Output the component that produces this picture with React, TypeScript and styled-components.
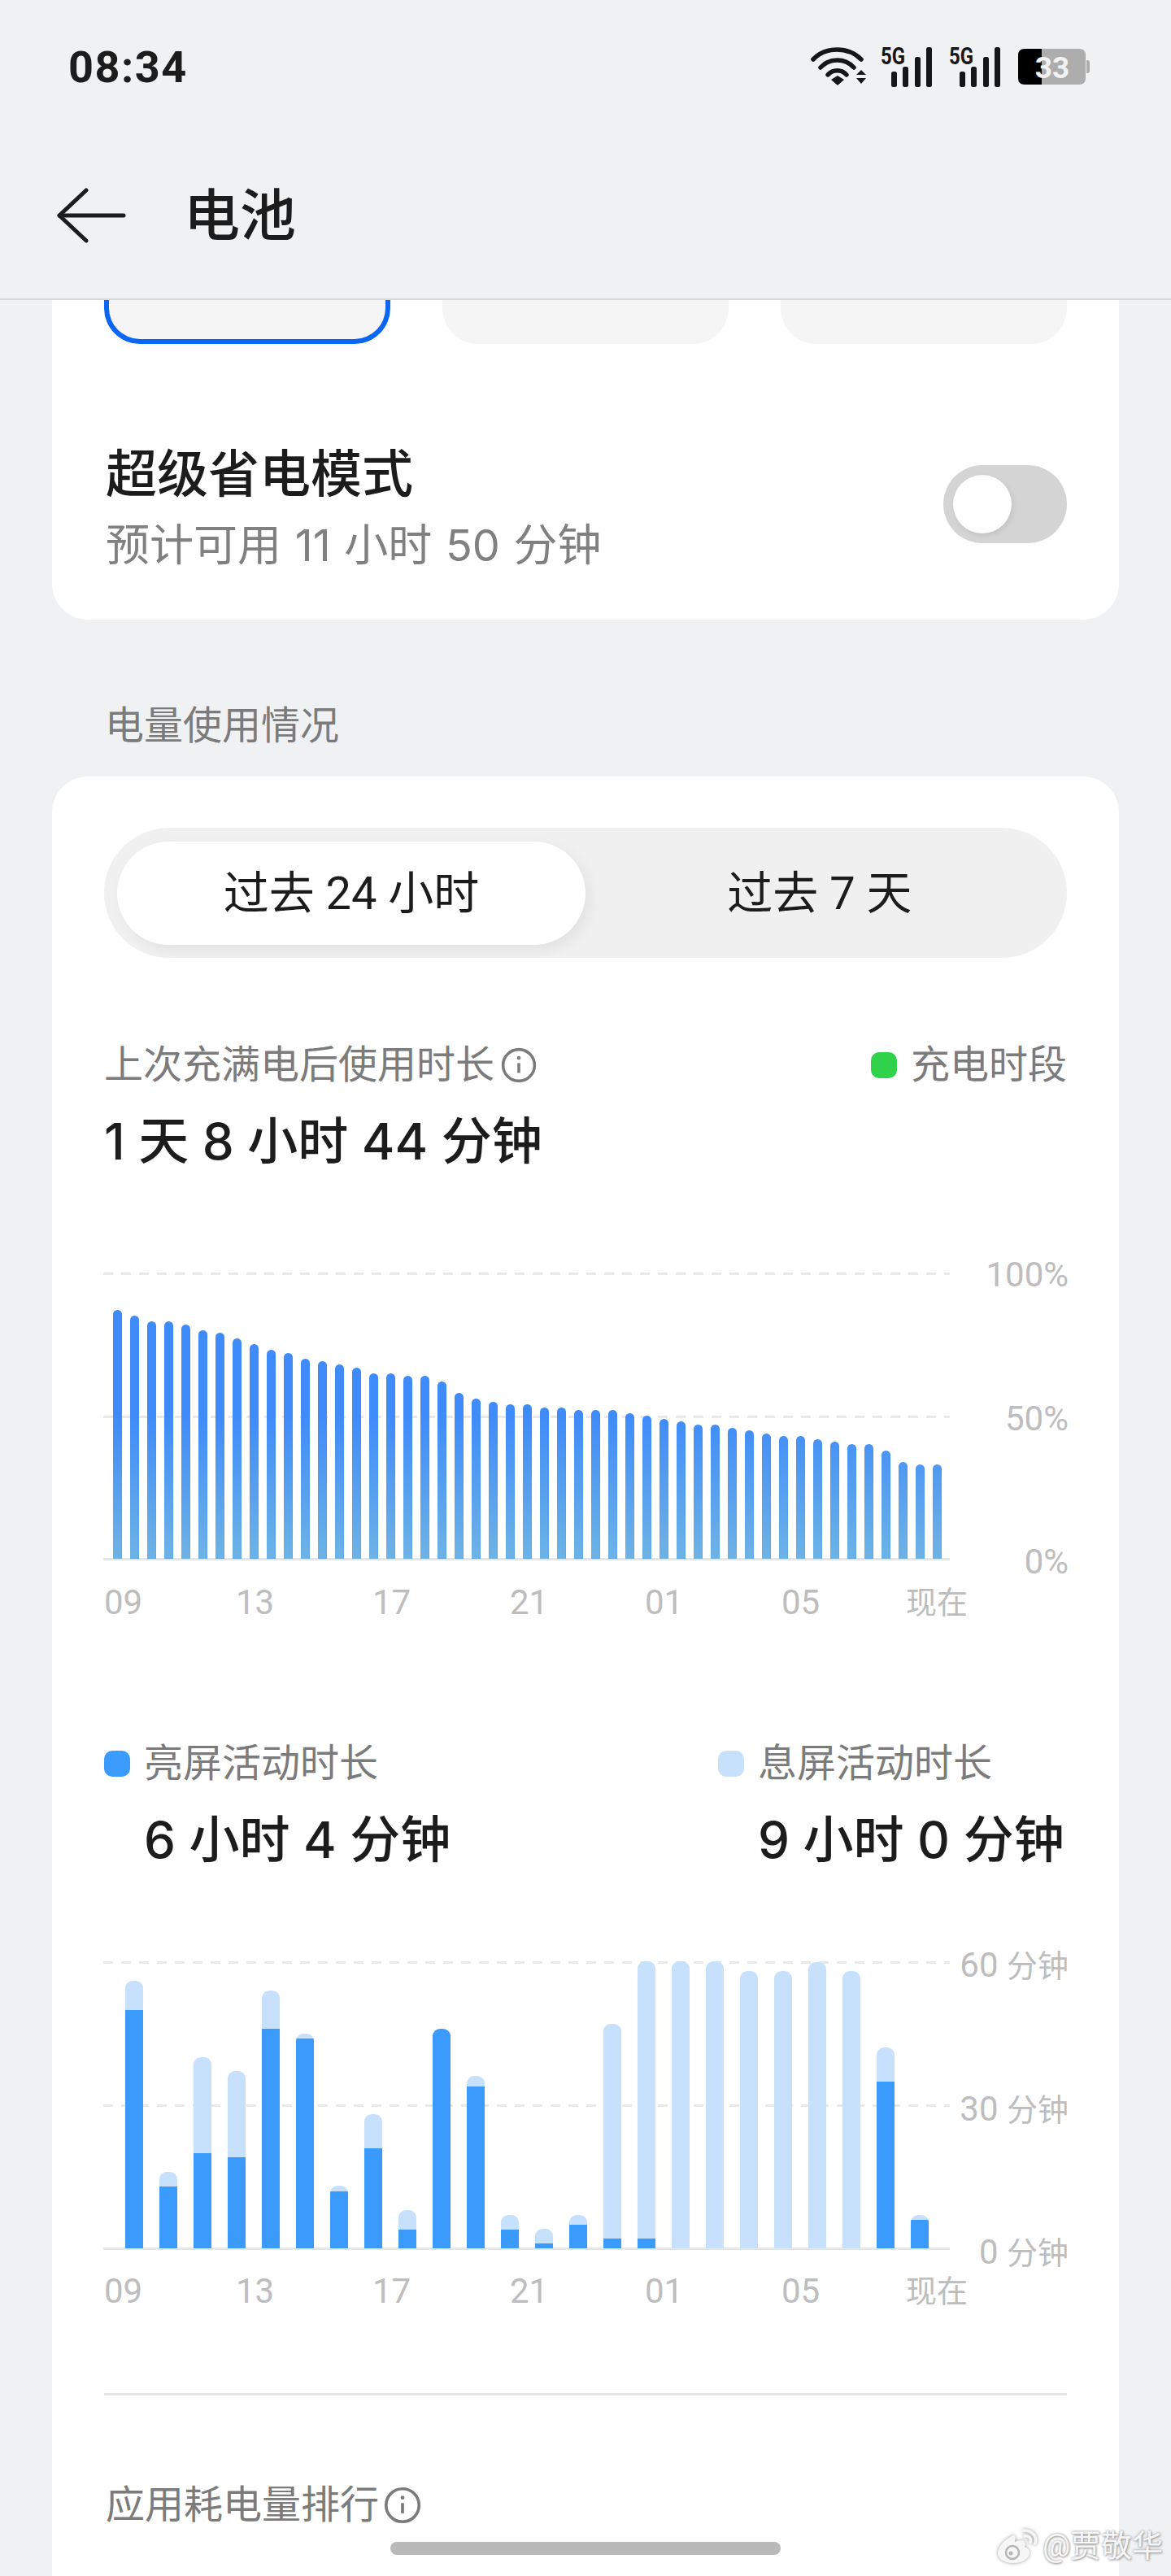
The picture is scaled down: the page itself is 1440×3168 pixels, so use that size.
import React from 'react';
import styled, { createGlobalStyle } from 'styled-components';

const levelTops = [
  335, 357, 378, 378, 388, 409, 420, 441, 462, 483, 494, 515, 525, 536, 547, 568, 568, 578, 578, 600, 642, 663, 673,
  684, 684, 694, 694, 705, 705, 705, 716, 726, 737, 747, 758, 758, 769, 779, 790, 800, 800, 811, 821, 831, 831, 853,
  895, 905, 905,
];

const activity = [
  [169, 276], [873, 927], [450, 804], [503, 819], [204, 345], [363, 381], [926, 945], [662, 786],
  [1014, 1086], [345, 345], [521, 558], [1032, 1086], [1084, 1137], [1032, 1068], [327, 1119], [97, 1119],
  [97, 1155], [97, 1155], [134, 1155], [134, 1155], [99, 1155], [134, 1155], [416, 540], [1032, 1050],
];

const hours = ['09', '13', '17', '21', '01', '05'];

const GlobalStyle = createGlobalStyle`
  html, body {
    margin: 0;
    padding: 0;
    background: #f0f1f3;
  }
  * {
    box-sizing: border-box;
  }
`;

const Page = styled.div`
  position: relative;
  width: 1440px;
  height: 3168px;
  overflow: hidden;
  background: #f0f1f3;
  font-family: Roboto, 'Noto Sans CJK SC', sans-serif;
  color: #1c1c1c;
`;

const Header = styled.header`
  height: 369px;
  border-bottom: 2px solid #d9d9d9;
`;

const StatusBar = styled.div`
  display: flex;
  align-items: center;
  justify-content: space-between;
  height: 164px;
  padding: 0 99px 0 84px;
`;

const Clock = styled.span`
  font-size: 54px;
  font-weight: 700;
  letter-spacing: 1.5px;
`;

const StatusIcons = styled.div`
  display: flex;
  align-items: center;
  gap: 18px;
`;

const SignalSvg = styled.svg`
  margin-top: -6px;
`;

const TitleBar = styled.div`
  display: flex;
  align-items: center;
  gap: 71px;
  height: 202px;
  padding-left: 70px;
`;

const Title = styled.h1`
  margin: 0;
  padding-top: 3px;
  font-size: 69px;
  font-weight: 500;
  line-height: 80px;
`;

const Card = styled.section`
  margin: 0 64px;
  background: #fff;
`;

const ModeCard = styled(Card)`
  border-radius: 0 0 44px 44px;
  padding: 0 64px 56px;
`;

const Tiles = styled.div`
  display: flex;
  gap: 64px;
`;

const Tile = styled.div<{ $active?: boolean }>`
  width: 352px;
  height: 54px;
  background: #f5f5f5;
  border-radius: 0 0 44px 44px;
  border: ${({ $active }) => ($active ? '6px solid #0a66f5' : 'none')};
  border-top: none;
`;

const SaverRow = styled.div`
  display: flex;
  justify-content: space-between;
  margin-top: 121px;
`;

const SaverText = styled.div`
  padding-left: 2px;
`;

const SaverTitle = styled.div`
  font-size: 63px;
  font-weight: 500;
  line-height: 80px;
`;

const SaverHint = styled.div`
  margin-top: 12px;
  font-family: Inter, 'Noto Sans CJK SC', sans-serif;
  font-size: 54px;
  line-height: 70px;
  word-spacing: 1.5px;
  color: #808080;
`;

const Toggle = styled.div`
  display: flex;
  align-items: center;
  width: 152px;
  height: 96px;
  margin-top: 28px;
  padding-left: 12px;
  border-radius: 48px;
  background: #d4d4d4;
`;

const Knob = styled.div`
  width: 72px;
  height: 72px;
  border-radius: 50%;
  background: #fff;
  box-shadow: 2px 3px 6px rgba(0, 0, 0, 0.08);
`;

const SectionLabel = styled.div`
  margin: 101px 0 32px 129px;
  font-size: 48px;
  line-height: 60px;
  color: #7b7b7b;
`;

const UsageCard = styled(Card)`
  border-radius: 44px 44px 0 0;
  padding: 63px 64px 120px;
`;

const Segmented = styled.div`
  display: flex;
  align-items: center;
  height: 160px;
  padding: 0 16px;
  border-radius: 80px;
  background: #f0f0f0;
`;

const Segment = styled.div<{ $active?: boolean }>`
  display: flex;
  align-items: center;
  justify-content: center;
  flex: ${({ $active }) => ($active ? '0 0 576px' : '1')};
  height: 127px;
  padding-top: 2px;
  border-radius: 64px;
  font-size: 56px;
  line-height: 60px;
  background: ${({ $active }) => ($active ? '#fff' : 'transparent')};
  box-shadow: ${({ $active }) => ($active ? '6px 6px 16px rgba(0, 0, 0, 0.06)' : 'none')};
`;

const StatRow = styled.div<{ $top: number }>`
  display: grid;
  grid-template-columns: 755px auto;
  margin-top: ${({ $top }) => $top}px;
`;

const SpreadRow = styled.div`
  display: flex;
  align-items: flex-start;
  justify-content: space-between;
  margin-top: 102px;
`;

const GreyLabel = styled.div`
  display: flex;
  align-items: center;
  font-size: 48px;
  line-height: 60px;
  color: #7b7b7b;
`;

const Swatch = styled.span<{ $color: string }>`
  width: 32px;
  height: 32px;
  border-radius: 10px;
  margin-right: 17px;
  background: ${({ $color }) => $color};
`;

const InfoIcon = styled.svg<{ $gap: number }>`
  margin-left: ${({ $gap }) => $gap}px;
`;

const BigValue = styled.div<{ $indent?: boolean }>`
  margin-top: 24px;
  padding-left: ${({ $indent }) => ($indent ? '49px' : '0')};
  font-family: Inter, 'Noto Sans CJK SC', sans-serif;
  font-size: 62px;
  font-weight: 500;
  line-height: 80px;
`;

const ChartRow = styled.div<{ $top: number }>`
  display: grid;
  grid-template-columns: 1041px 146px;
  margin: ${({ $top }) => $top}px 0 0 -1px;
`;

const Plot = styled.div`
  display: grid;
  height: 354px;
`;

const GridLines = styled.div`
  grid-area: 1 / 1;
  display: flex;
  flex-direction: column;
  justify-content: space-between;
`;

const DashLine = styled.div<{ $solid?: boolean }>`
  height: 3px;
  background: ${({ $solid }) =>
    $solid ? '#e6e6e6' : 'repeating-linear-gradient(90deg, #e8e8e8 0 12px, transparent 12px 22px)'};
`;

const Bars = styled.div<{ $gap: number; $pad: number }>`
  grid-area: 1 / 1;
  display: flex;
  align-items: flex-end;
  gap: ${({ $gap }) => $gap}px;
  padding: 0 0 2px ${({ $pad }) => $pad}px;
`;

const LevelBar = styled.div`
  width: 10.5px;
  border-radius: 5.25px 5.25px 0 0;
  background: linear-gradient(#3f8bfa 0, #3f8bfa 130px, #6eb3e5 306px) bottom / 100% 306px no-repeat;
  background-color: #3f8bfa;
`;

const StackBar = styled.div`
  display: flex;
  flex-direction: column;
  justify-content: flex-end;
  width: 22px;
  overflow: hidden;
  border-radius: 9px 9px 0 0;
  background: #c7e1fd;
`;

const StackFill = styled.div`
  background: #3a9bfc;
`;

const YAxis = styled.div<{ $top: number; $height: number }>`
  display: flex;
  flex-direction: column;
  align-items: flex-end;
  justify-content: space-between;
  height: ${({ $height }) => $height}px;
  margin-top: ${({ $top }) => $top}px;
  margin-bottom: -60px;
  font-size: 42px;
  line-height: 50px;
  white-space: nowrap;
  color: #bdbdbd;
`;

const Unit = styled.span`
  font-size: 38px;
`;

const XAxis = styled.div`
  display: grid;
  grid-template-columns: 162px 168px 169px 166px 168px 153px auto;
  margin-top: 27px;
  font-size: 42px;
  line-height: 50px;
  color: #bdbdbd;
`;

const Divider = styled.div`
  height: 3px;
  margin-top: 100px;
  background: #e6e6e6;
`;

const RankRow = styled(GreyLabel)`
  margin-top: 105px;
  padding-left: 2px;
`;

const HomeBar = styled.div`
  position: absolute;
  left: 480px;
  top: 3126px;
  width: 480px;
  height: 16px;
  border-radius: 8px;
  background: #b9b9b9;
`;

const Watermark = styled.div`
  position: absolute;
  left: 1226px;
  top: 3107px;
  display: flex;
  align-items: center;
  gap: 4px;
  font-size: 38px;
  line-height: 48px;
  white-space: nowrap;
  color: #f6f6f6;
  text-shadow: 0 0 3px #9a9a9a, 1px 1px 3px #9a9a9a;
`;

const WeiboSvg = styled.svg`
  filter: drop-shadow(0 0 2px #9a9a9a);
`;

const Info = ({ size, gap }: { size: number; gap: number }) => (
  <InfoIcon $gap={gap} width={size} height={size} viewBox="0 0 42 42" fill="none" stroke="#7b7b7b">
    <circle cx="21" cy="21" r="18.5" strokeWidth="3.4" />
    <path d="M21 18.5V30" strokeWidth="3.4" />
    <circle cx="21" cy="12.5" r="2.2" fill="#7b7b7b" stroke="none" />
  </InfoIcon>
);

const Wifi = () => (
  <svg width="68" height="48" viewBox="0 0 68 48" fill="none" stroke="#161616" strokeWidth="5.5" strokeLinecap="round">
    <path d="M3 15C18 -1 46 -1 62 15" />
    <path d="M12 25C23 13 42 13 53 25" />
    <path d="M21 34C27 27 38 27 44 34" />
    <path d="M25 40L33 35L41 40L33 47Z" fill="#161616" stroke="none" />
    <path d="M56 34L62 28L68 34Z M56 38H68L62 45Z" fill="#161616" stroke="none" />
  </svg>
);

const Signal = () => (
  <SignalSvg width="66" height="56" viewBox="0 -6 66 56">
    <text
      x="0"
      y="22"
      fontFamily="Roboto, sans-serif"
      fontWeight="700"
      fontSize="29"
      textLength="30"
      lengthAdjust="spacingAndGlyphs"
      fill="#161616"
    >
      5G
    </text>
    <rect x="13" y="31" width="7" height="19" rx="2.5" fill="#161616" />
    <rect x="27" y="25" width="7" height="25" rx="2.5" fill="#161616" />
    <rect x="42" y="13" width="7" height="37" rx="2.5" fill="#161616" />
    <rect x="56" y="1" width="7" height="49" rx="2.5" fill="#161616" />
  </SignalSvg>
);

const Battery = () => (
  <svg width="90" height="46" viewBox="0 0 90 46">
    <path d="M30 1H76Q84 1 84 9V37Q84 45 76 45H30Z" fill="#adadad" />
    <path d="M30 1H9Q1 1 1 9V37Q1 45 9 45H30Z" fill="#000" />
    <path d="M85 15H86Q89 15 89 18V28Q89 31 86 31H85Z" fill="#adadad" />
    <text x="43" y="37" textAnchor="middle" fontFamily="Roboto, sans-serif" fontWeight="700" fontSize="37" fill="#f2f2f2">
      33
    </text>
  </svg>
);

const WeiboMark = () => (
  <WeiboSvg width="52" height="44" viewBox="0 0 52 44" fill="#f6f6f6">
    <path d="M20 9C9 14 0 24 1 32C2 40 13 44 23 43C34 42 41 36 40 29C39 25 36 24 34 23C36 18 34 15 29 15C25 15 23 17 22 17C23 12 23 8 20 9Z" />
    <circle cx="19" cy="30" r="8" fill="none" stroke="#b5b5b5" strokeWidth="2.5" />
    <circle cx="17" cy="31" r="2.5" fill="#b5b5b5" />
    <path d="M33 3C42 2 50 10 47 19M34 10C39 9 43 13 41 18" fill="none" stroke="#f6f6f6" strokeWidth="3.5" strokeLinecap="round" />
  </WeiboSvg>
);

const XLabels = () => (
  <XAxis>
    {hours.map((h) => (
      <span key={h}>{h}</span>
    ))}
    <Unit>现在</Unit>
  </XAxis>
);

const App = () => (
  <Page>
    <GlobalStyle />
    <Header>
      <StatusBar>
        <Clock>08:34</Clock>
        <StatusIcons>
          <Wifi />
          <Signal />
          <Signal />
          <Battery />
        </StatusIcons>
      </StatusBar>
      <TitleBar>
        <svg width="85" height="68" viewBox="0 0 85 68" fill="none" stroke="#1c1c1c" strokeWidth="5" strokeLinecap="round" strokeLinejoin="round">
          <path d="M36 3L3 34L36 65" />
          <path d="M3 34H82" />
        </svg>
        <Title>电池</Title>
      </TitleBar>
    </Header>

    <ModeCard>
      <Tiles>
        <Tile $active />
        <Tile />
        <Tile />
      </Tiles>
      <SaverRow>
        <SaverText>
          <SaverTitle>超级省电模式</SaverTitle>
          <SaverHint>预计可用 11 小时 50 分钟</SaverHint>
        </SaverText>
        <Toggle>
          <Knob />
        </Toggle>
      </SaverRow>
    </ModeCard>

    <SectionLabel>电量使用情况</SectionLabel>

    <UsageCard>
      <Segmented>
        <Segment $active>过去 24 小时</Segment>
        <Segment>过去 7 天</Segment>
      </Segmented>

      <SpreadRow>
        <div>
          <GreyLabel>
            上次充满电后使用时长
            <Info size={44} gap={8} />
          </GreyLabel>
          <BigValue>1 天 8 小时 44 分钟</BigValue>
        </div>
        <GreyLabel>
          <Swatch $color="#2fd24a" />
          充电时段
        </GreyLabel>
      </SpreadRow>

      <ChartRow $top={121}>
        <Plot>
          <GridLines>
            <DashLine />
            <DashLine />
            <DashLine $solid />
          </GridLines>
          <Bars $gap={10.5} $pad={12}>
            {levelTops.map((top, i) => (
              <LevelBar key={i} style={{ height: (1253 - top) / 3 }} />
            ))}
          </Bars>
        </Plot>
        <YAxis $top={-22} $height={403}>
          <span>100%</span>
          <span>50%</span>
          <span>0%</span>
        </YAxis>
      </ChartRow>
      <XLabels />

      <StatRow $top={143}>
        <div>
          <GreyLabel>
            <Swatch $color="#3a9bfc" />
            亮屏活动时长
          </GreyLabel>
          <BigValue $indent>6 小时 4 分钟</BigValue>
        </div>
        <div>
          <GreyLabel>
            <Swatch $color="#c7e1fd" />
            息屏活动时长
          </GreyLabel>
          <BigValue $indent>9 小时 0 分钟</BigValue>
        </div>
      </StatRow>

      <ChartRow $top={109}>
        <Plot>
          <GridLines>
            <DashLine />
            <DashLine />
            <DashLine $solid />
          </GridLines>
          <Bars $gap={20} $pad={27}>
            {activity.map(([total, fill], i) => (
              <StackBar key={i} style={{ height: (1155 - total) / 3 }}>
                <StackFill style={{ height: (1155 - fill) / 3 }} />
              </StackBar>
            ))}
          </Bars>
        </Plot>
        <YAxis $top={-20} $height={404}>
          <span>
            60 <Unit>分钟</Unit>
          </span>
          <span>
            30 <Unit>分钟</Unit>
          </span>
          <span>
            0 <Unit>分钟</Unit>
          </span>
        </YAxis>
      </ChartRow>
      <XLabels />

      <Divider />
      <RankRow>
        应用耗电量排行
        <Info size={46} gap={6} />
      </RankRow>
    </UsageCard>

    <HomeBar />
    <Watermark>
      <WeiboMark />
      @贾敬华
    </Watermark>
  </Page>
);

export default App;
